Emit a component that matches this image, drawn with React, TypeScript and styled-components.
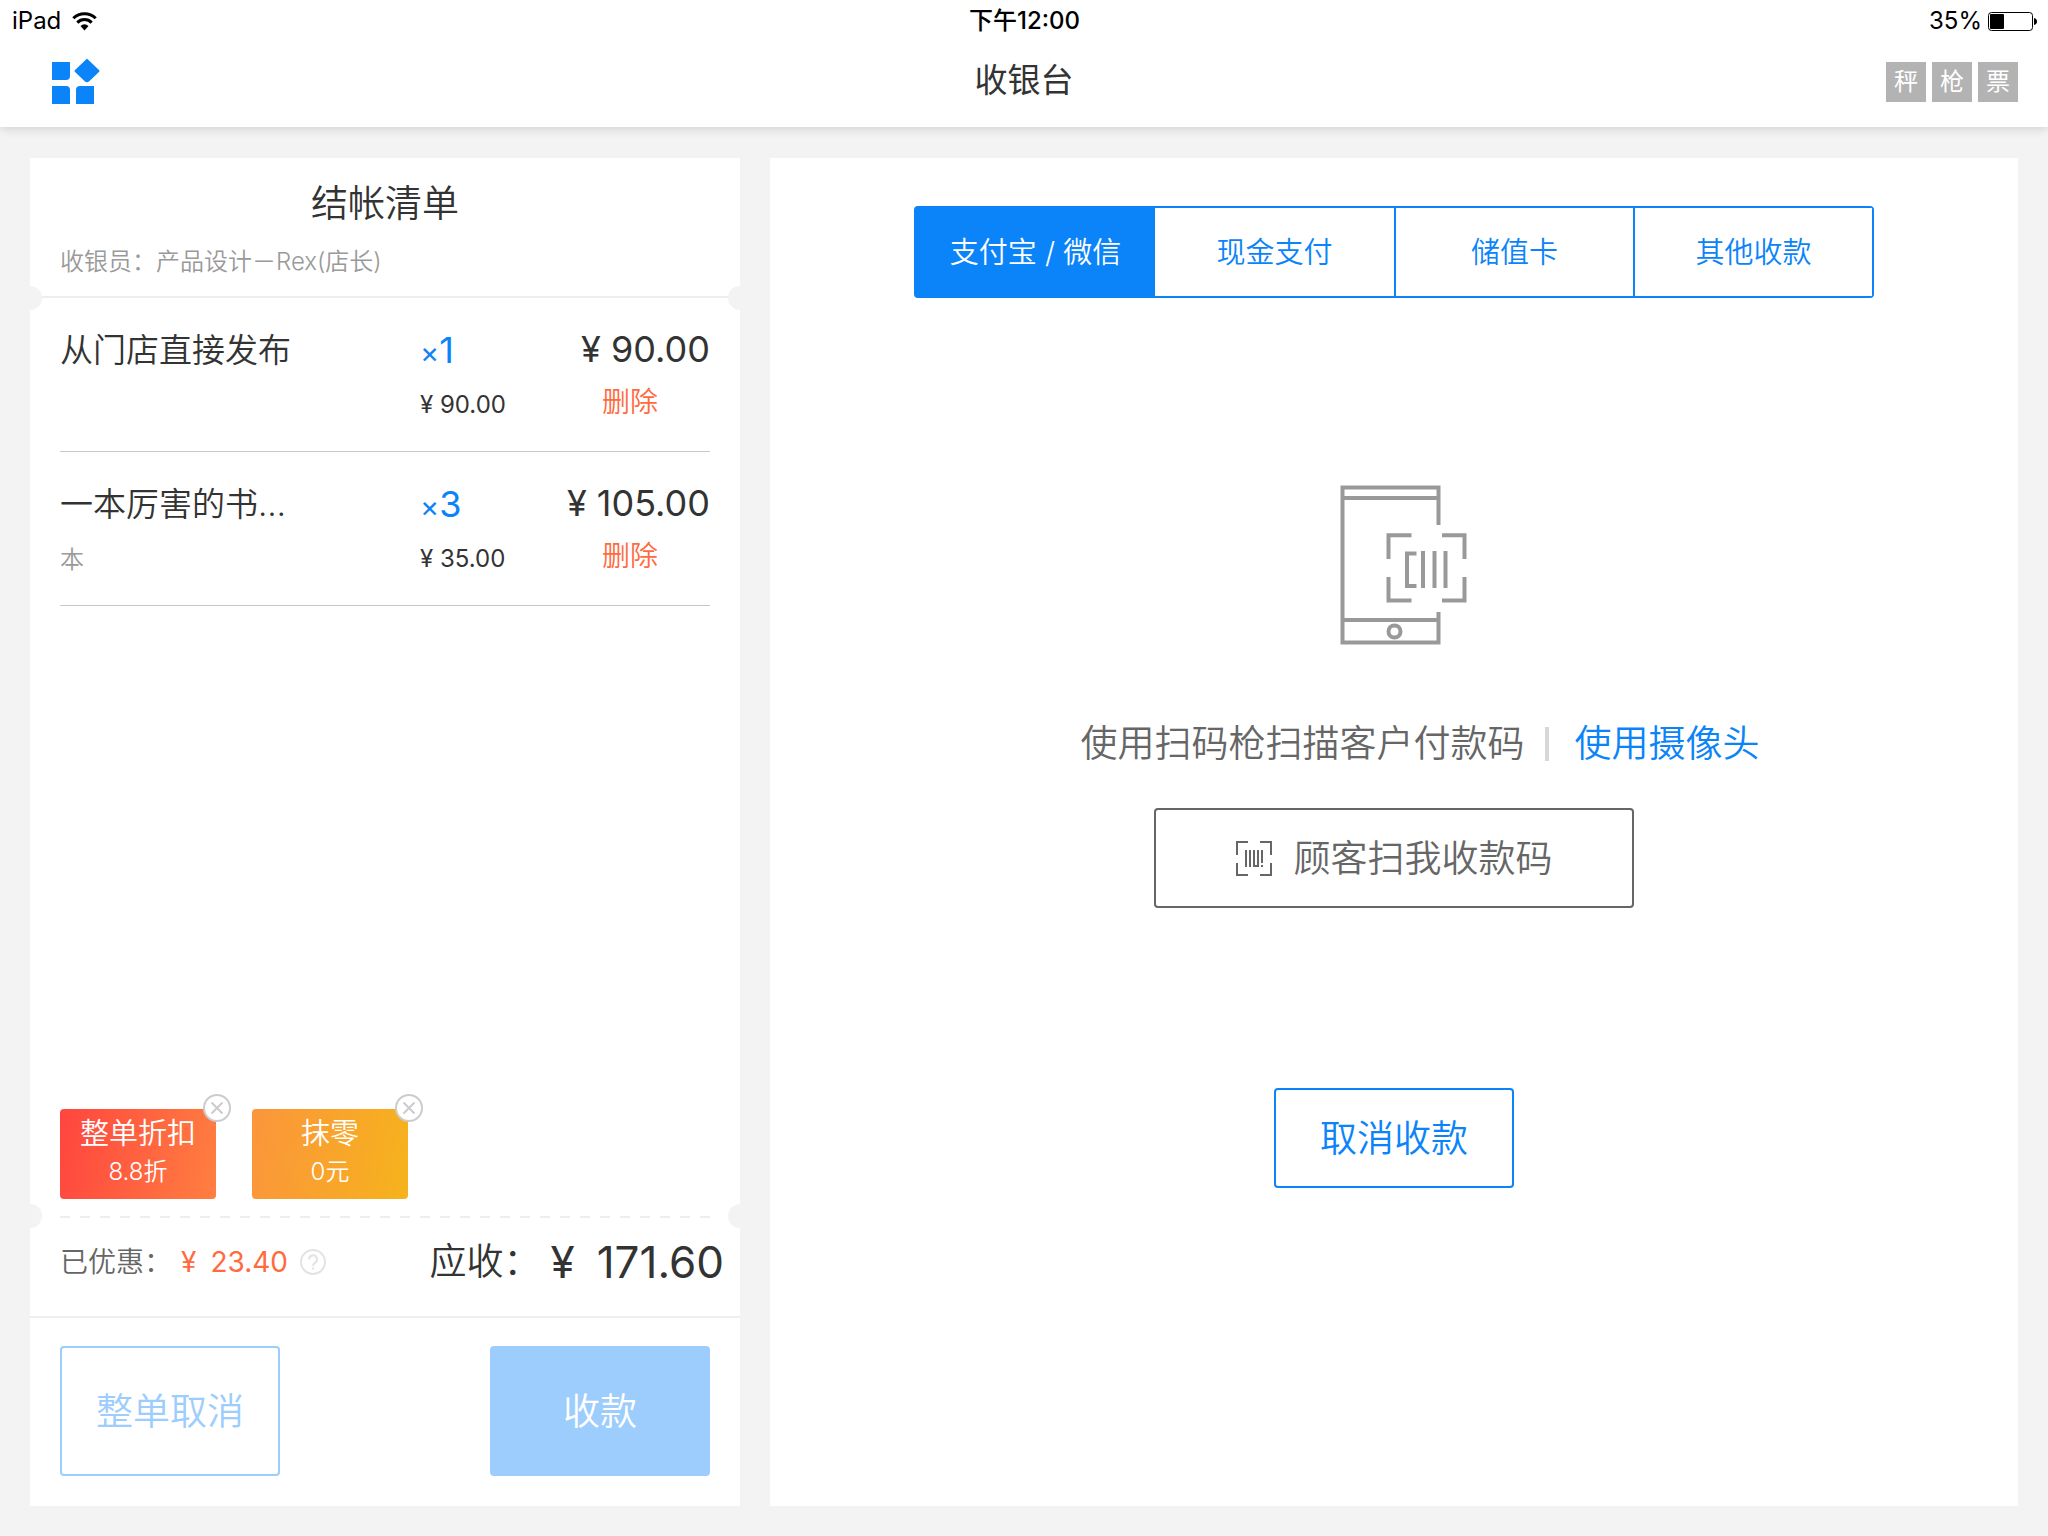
import React from "react";
import styled, { createGlobalStyle } from "styled-components";

const blue = "#0b84f9";
const paleBlue = "#9dcdfd";
const canvas = "#f3f3f3";
const ink = "#333333";
const orange = "#ff6a40";
const sans = `Inter, "Noto Sans CJK SC", sans-serif`;

const GlobalStyle = createGlobalStyle`
  *, *::before, *::after { box-sizing: border-box; }
  html, body, #root { height: 100%; }
  body { margin: 0; background: ${canvas}; color: ${ink}; font-family: ${sans}; font-weight: 350; }
  h1, h2, p, ul { margin: 0; padding: 0; font-weight: inherit; }
  ul { list-style: none; }
  button { font: inherit; padding: 0; border: 0; background: none; color: inherit; cursor: pointer; }
  a { text-decoration: none; }
  svg { display: block; flex: none; }
`;

const Screen = styled.div`
  min-height: 100%;
  display: flex;
  flex-direction: column;
`;

const TopBar = styled.header`
  background: #fff;
  box-shadow: 0 1px 10px rgba(0, 0, 0, 0.16);
`;

const StatusBar = styled.div`
  display: grid;
  grid-template-columns: 1fr auto 1fr;
  align-items: center;
  height: 42px;
  padding: 0 11px 0 12px;
  color: #000;
  font-size: 24px;
  line-height: 40px;
  font-weight: 400;
`;

const StatusSide = styled.div<{ $end?: boolean }>`
  display: flex;
  align-items: center;
  gap: ${(p) => (p.$end ? 6 : 11)}px;
  justify-content: ${(p) => (p.$end ? "flex-end" : "flex-start")};
`;

const Clock = styled.time`
  font-weight: 500;
`;

const NavBar = styled.div`
  display: grid;
  grid-template-columns: 1fr auto 1fr;
  align-items: center;
  height: 85px;
  padding: 0 30px 5px 52px;
`;

const MenuButton = styled.button`
  justify-self: start;
  padding-bottom: 2px;
`;

const PageTitle = styled.h1`
  font-size: 33px;
  line-height: 48px;
  font-weight: 400;
  padding: 0 22px 4px 0;
`;

const Devices = styled.ul`
  display: flex;
  justify-content: flex-end;
  gap: 6px;
`;

const Device = styled.li`
  width: 40px;
  height: 40px;
  background: #b3b3b3;
  color: #fff;
  font-size: 24px;
  line-height: 40px;
  font-weight: 400;
  text-align: center;
`;

const Main = styled.main`
  flex: 1;
  display: grid;
  grid-template-columns: 710fr 1248fr;
  gap: 30px;
  padding: 31px 30px 30px;
`;

const Receipt = styled.section`
  display: flex;
  flex-direction: column;
  background: #fff;
  overflow: hidden;
`;

const ReceiptHead = styled.div`
  height: 138px;
  padding: 22px 30px 0;
`;

const ReceiptTitle = styled.h2`
  font-size: 37px;
  line-height: 48px;
  text-align: center;
`;

const Cashier = styled.p`
  margin-top: 16px;
  color: #999;
  font-size: 24px;
  line-height: 36px;
`;

const Rule = styled.div<{ $dashed?: boolean }>`
  position: relative;
  height: 2px;
  margin: 0 ${(p) => (p.$dashed ? 30 : 0)}px;
  background: ${(p) =>
    p.$dashed ? "repeating-linear-gradient(90deg, #eee 0 10px, transparent 10px 20px)" : "#eee"};
`;

const Notch = styled.i<{ $side: "left" | "right"; $inset?: boolean }>`
  position: absolute;
  top: ${(p) => (p.$inset ? -12 : -10)}px;
  ${(p) => p.$side}: ${(p) => (p.$inset ? -42 : -12)}px;
  width: 24px;
  height: 24px;
  border-radius: 50%;
  background: ${canvas};
`;

const Items = styled.ul`
  flex: 1;
  padding: 0 30px;
`;

const Item = styled.li`
  display: grid;
  grid-template-columns: 360fr 130fr 160fr;
  height: 154px;
  padding-top: 28px;
  border-bottom: 1px solid #c8c8c8;
`;

const ItemCell = styled.div<{ $end?: boolean }>`
  display: flex;
  flex-direction: column;
  align-items: ${(p) => (p.$end ? "stretch" : "flex-start")};
  text-align: ${(p) => (p.$end ? "right" : "left")};
  white-space: nowrap;
`;

const ItemName = styled.span`
  font-size: 33px;
  line-height: 48px;
`;

const ItemUnit = styled.span`
  margin-top: 14px;
  color: #999;
  font-size: 24px;
  line-height: 36px;
`;

const Quantity = styled.span`
  color: ${blue};
  font-size: 36px;
  line-height: 48px;
  font-weight: 400;
`;

const Times = styled.span`
  font-size: 29px;
`;

const UnitPrice = styled.span`
  margin-top: 10px;
  font-size: 24px;
  line-height: 36px;
  font-weight: 400;
`;

const LinePrice = styled.span`
  font-size: 36px;
  line-height: 46px;
  font-weight: 400;
`;

const DeleteButton = styled.button`
  margin-top: 10px;
  color: ${orange};
  font-size: 28px;
  line-height: 40px;
`;

const Coupons = styled.ul`
  display: flex;
  gap: 36px;
  padding: 0 30px 17px;
`;

const Coupon = styled.li<{ $from: string; $to: string }>`
  position: relative;
  width: 156px;
  height: 90px;
  padding-top: 5px;
  border-radius: 4px;
  background: linear-gradient(100deg, ${(p) => p.$from}, ${(p) => p.$to});
  color: #fff;
  text-align: center;
`;

const CouponName = styled.p`
  font-size: 29px;
  line-height: 40px;
`;

const CouponValue = styled.p`
  font-size: 24px;
  line-height: 36px;
`;

const CouponClose = styled.button`
  position: absolute;
  top: -15px;
  right: -15px;
`;

const Totals = styled.div`
  display: flex;
  justify-content: space-between;
  align-items: center;
  height: 98px;
  padding: 0 16px 10px 30px;
  white-space: nowrap;
`;

const Saved = styled.p`
  display: flex;
  align-items: center;
  color: #666;
  font-size: 28px;
  line-height: 40px;
`;

const SavedAmount = styled.span`
  display: flex;
  gap: 14px;
  margin: 0 12px 0 9px;
  color: ${orange};
  font-weight: 400;
`;

const Due = styled.p`
  display: flex;
  align-items: center;
  font-size: 37px;
  line-height: 50px;
`;

const DueAmount = styled.strong`
  display: flex;
  gap: 22px;
  margin-left: 10px;
  font-size: 44px;
  font-weight: 400;
`;

const Actions = styled.div`
  display: flex;
  justify-content: space-between;
  padding: 28px 30px 30px;
`;

const BigButton = styled.button<{ $filled?: boolean }>`
  width: 220px;
  height: 130px;
  padding-top: 2px;
  border: 2px solid ${paleBlue};
  border-radius: 4px;
  background: ${(p) => (p.$filled ? paleBlue : "#fff")};
  color: ${(p) => (p.$filled ? "#fff" : paleBlue)};
  font-size: 37px;
  line-height: 50px;
`;

const Payment = styled.section`
  display: flex;
  flex-direction: column;
  align-items: center;
  background: #fff;
  padding-top: 48px;
`;

const Tabs = styled.div`
  display: grid;
  grid-template-columns: repeat(4, 1fr);
  width: 960px;
  max-width: 100%;
  border: 2px solid ${blue};
  border-radius: 4px;
`;

const Tab = styled.button<{ $active?: boolean }>`
  height: 88px;
  padding-top: 2px;
  background: ${(p) => (p.$active ? blue : "#fff")};
  color: ${(p) => (p.$active ? "#fff" : blue)};
  font-size: 29px;
  line-height: 40px;
  & + & + & {
    border-left: 2px solid ${blue};
  }
`;

const Figure = styled.div`
  margin: 187px 0 74px;
  padding-left: 19px;
`;

const Prompt = styled.p`
  display: flex;
  align-items: center;
  padding-left: 52px;
  color: #666;
  font-size: 37px;
  line-height: 50px;
  white-space: nowrap;
`;

const Divider = styled.span`
  width: 4px;
  height: 34px;
  margin: 0 26px 0 20px;
  background: #d8d8d8;
`;

const CameraLink = styled.a`
  color: ${blue};
`;

const OutlineButton = styled.button<{ $tone: string; $width: number; $top: number }>`
  display: flex;
  align-items: center;
  justify-content: center;
  gap: 22px;
  width: ${(p) => p.$width}px;
  height: 100px;
  margin-top: ${(p) => p.$top}px;
  padding-top: 2px;
  border: 2px solid ${(p) => p.$tone};
  border-radius: 4px;
  color: ${(p) => p.$tone};
  font-size: 37px;
  line-height: 50px;
`;

const WifiIcon = () => (
  <svg width="25" height="19" viewBox="0 0 25 19" fill="none" stroke="#000" strokeWidth="3">
    <path d="M1.3 6.3a16 16 0 0 1 22.4 0" />
    <path d="M5.3 10.6a10.2 10.2 0 0 1 14.4 0" />
    <path d="M12.5 18.5l-4-4.6a5.8 5.8 0 0 1 8 0z" fill="#000" stroke="none" />
  </svg>
);

const BatteryIcon = () => (
  <svg width="49" height="19" viewBox="0 0 49 19">
    <rect x="0.5" y="0.5" width="44" height="18" rx="3" fill="none" stroke="#000" />
    <rect x="2" y="2" width="14" height="15" rx="1" fill="#000" />
    <path d="M46 6c4 .6 4 6.400 0 7z" fill="#000" />
  </svg>
);

const AppsIcon = () => (
  <svg width="48" height="46" viewBox="0 0 48 46" fill={blue}>
    <path d="M0 4h18v14a4 4 0 0 1-4 4H0z" />
    <path d="M0 28h14a4 4 0 0 1 4 4v14H0z" />
    <path d="M28 28h14v18H24V32a4 4 0 0 1 4-4z" />
    <path d="M34.300 1.200a1 1 0 0 1 1.400 0L47.200 12.300a1 1 0 0 1 0 1.400L37.500 23a3.600 3.600 0 0 1-5 0L22.800 13.700a1 1 0 0 1 0-1.400z" />
  </svg>
);

const CloseIcon = () => (
  <svg width="28" height="28" viewBox="0 0 28 28" fill="#fff" stroke="#ccc" strokeWidth="2">
    <circle cx="14" cy="14" r="13" />
    <path d="M8.500 8.500l11 11M19.500 8.500l-11 11" />
  </svg>
);

const HelpIcon = () => (
  <svg width="26" height="26" viewBox="0 0 26 26" fill="none" stroke="#e3e3e3" strokeWidth="2">
    <circle cx="13" cy="13" r="12" />
    <path d="M9 10.500a4 4 0 1 1 6 3.300c-1.400.9-2 1.500-2 3.200" />
    <path d="M13 18.500v2" />
  </svg>
);

const PhoneScanIcon = () => (
  <svg width="127" height="160" viewBox="0 0 127 160" fill="none" stroke="#999" strokeWidth="4">
    <path d="M98.500 40V2.500H2.500v155h96V127" />
    <path d="M2.500 13h96M2.500 135h96" />
    <circle cx="54.500" cy="146.500" r="6" />
    <path d="M71.500 50.300H48.500V74M102 50.300h22.500V74M48.500 92v23.500h23M124.500 92v23.500H102" />
    <path d="M76.500 68.500h-9.500v32.500h9.500M83 66v37M94.500 66v37M105.500 66v37" />
  </svg>
);

const BarcodeIcon = () => (
  <svg width="36" height="36" viewBox="0 0 36 36" fill="none" stroke="#666" strokeWidth="2">
    <path d="M12 1H1v13M24 1h11v13M1 22v12h11M35 22v12H24" />
    <path d="M10 9v17M14 9v17M18 9v16h4V9M26 9v13M26 24v2" />
  </svg>
);

const items = [
  { name: "从门店直接发布", unit: "", count: 1, price: "90.00", total: "90.00" },
  { name: "一本厉害的书…", unit: "本", count: 3, price: "35.00", total: "105.00" },
];

const coupons = [
  { name: "整单折扣", value: "8.8折", from: "#ff453f", to: "#ff7f40" },
  { name: "抹零", value: "0元", from: "#fb953c", to: "#f6b31c" },
];

const tabs = ["支付宝 / 微信", "现金支付", "储值卡", "其他收款"];

export default function App() {
  const [tab, setTab] = React.useState(0);
  return (
    <>
      <GlobalStyle />
      <Screen>
        <TopBar>
          <StatusBar>
            <StatusSide>
              iPad <WifiIcon />
            </StatusSide>
            <Clock>下午12:00</Clock>
            <StatusSide $end>
              35% <BatteryIcon />
            </StatusSide>
          </StatusBar>
          <NavBar>
            <MenuButton aria-label="菜单">
              <AppsIcon />
            </MenuButton>
            <PageTitle>收银台</PageTitle>
            <Devices>
              {["秤", "枪", "票"].map((d) => (
                <Device key={d}>{d}</Device>
              ))}
            </Devices>
          </NavBar>
        </TopBar>
        <Main>
          <Receipt>
            <ReceiptHead>
              <ReceiptTitle>结帐清单</ReceiptTitle>
              <Cashier>收银员：产品设计－Rex(店长)</Cashier>
            </ReceiptHead>
            <Rule>
              <Notch $side="left" />
              <Notch $side="right" />
            </Rule>
            <Items>
              {items.map((item) => (
                <Item key={item.name}>
                  <ItemCell>
                    <ItemName>{item.name}</ItemName>
                    {item.unit && <ItemUnit>{item.unit}</ItemUnit>}
                  </ItemCell>
                  <ItemCell>
                    <Quantity>
                      <Times>×</Times>
                      {item.count}
                    </Quantity>
                    <UnitPrice>¥ {item.price}</UnitPrice>
                  </ItemCell>
                  <ItemCell $end>
                    <LinePrice>¥ {item.total}</LinePrice>
                    <DeleteButton>删除</DeleteButton>
                  </ItemCell>
                </Item>
              ))}
            </Items>
            <Coupons>
              {coupons.map((c) => (
                <Coupon key={c.name} $from={c.from} $to={c.to}>
                  <CouponName>{c.name}</CouponName>
                  <CouponValue>{c.value}</CouponValue>
                  <CouponClose aria-label="移除">
                    <CloseIcon />
                  </CouponClose>
                </Coupon>
              ))}
            </Coupons>
            <Rule $dashed>
              <Notch $side="left" $inset />
              <Notch $side="right" $inset />
            </Rule>
            <Totals>
              <Saved>
                已优惠：
                <SavedAmount>
                  <span>¥</span>
                  <span>23.40</span>
                </SavedAmount>
                <HelpIcon />
              </Saved>
              <Due>
                应收：
                <DueAmount>
                  <span>¥</span>
                  <span>171.60</span>
                </DueAmount>
              </Due>
            </Totals>
            <Rule />
            <Actions>
              <BigButton>整单取消</BigButton>
              <BigButton $filled>收款</BigButton>
            </Actions>
          </Receipt>
          <Payment>
            <Tabs role="tablist">
              {tabs.map((label, i) => (
                <Tab key={label} role="tab" aria-selected={i === tab} $active={i === tab} onClick={() => setTab(i)}>
                  {label}
                </Tab>
              ))}
            </Tabs>
            <Figure>
              <PhoneScanIcon />
            </Figure>
            <Prompt>
              使用扫码枪扫描客户付款码
              <Divider />
              <CameraLink href="#camera">使用摄像头</CameraLink>
            </Prompt>
            <OutlineButton $tone="#666" $width={480} $top={39}>
              <BarcodeIcon />
              顾客扫我收款码
            </OutlineButton>
            <OutlineButton $tone={blue} $width={240} $top={180}>
              取消收款
            </OutlineButton>
          </Payment>
        </Main>
      </Screen>
    </>
  );
}
